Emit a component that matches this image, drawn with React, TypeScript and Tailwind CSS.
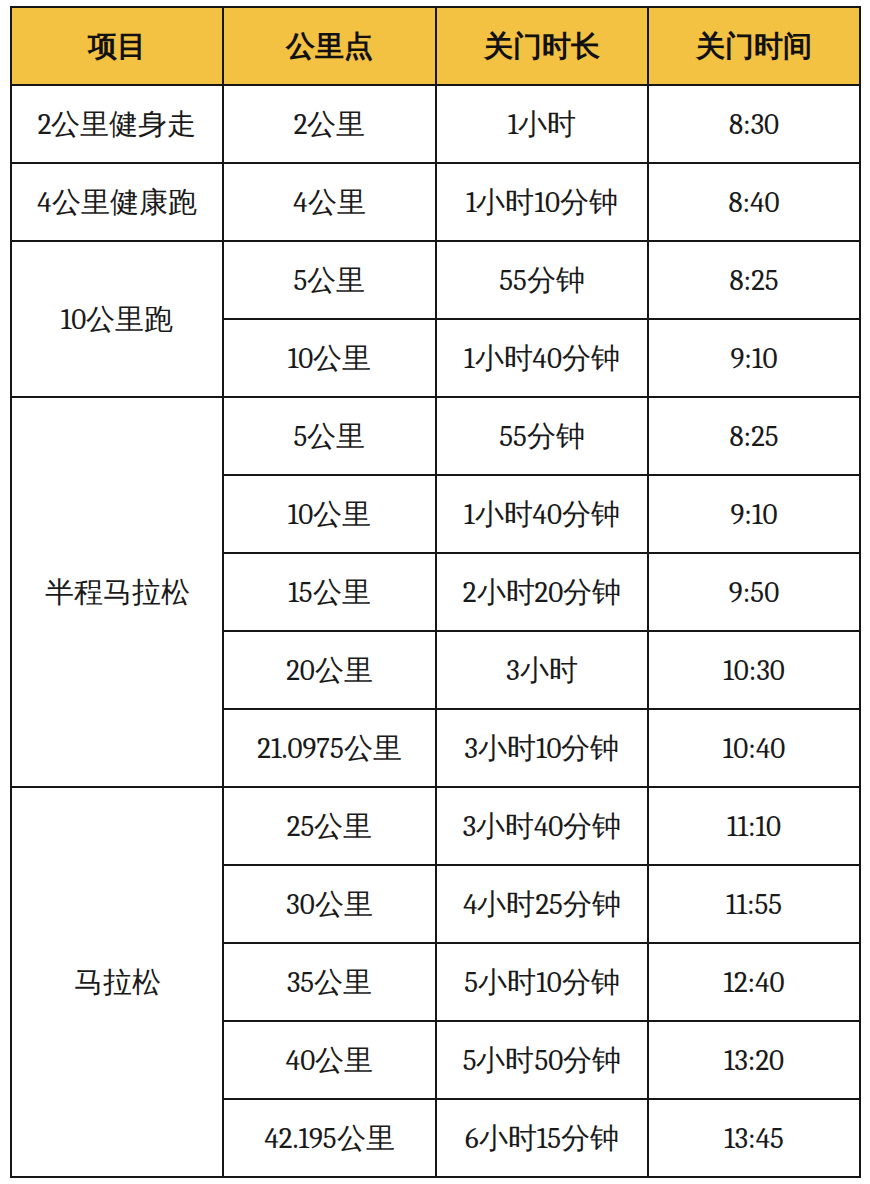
import React from "react";

type Row = { km: string; dur: string; time: string };

const groups: { name: string; rows: Row[] }[] = [
  { name: "2公里健身走", rows: [{ km: "2公里", dur: "1小时", time: "8:30" }] },
  { name: "4公里健康跑", rows: [{ km: "4公里", dur: "1小时10分钟", time: "8:40" }] },
  {
    name: "10公里跑",
    rows: [
      { km: "5公里", dur: "55分钟", time: "8:25" },
      { km: "10公里", dur: "1小时40分钟", time: "9:10" },
    ],
  },
  {
    name: "半程马拉松",
    rows: [
      { km: "5公里", dur: "55分钟", time: "8:25" },
      { km: "10公里", dur: "1小时40分钟", time: "9:10" },
      { km: "15公里", dur: "2小时20分钟", time: "9:50" },
      { km: "20公里", dur: "3小时", time: "10:30" },
      { km: "21.0975公里", dur: "3小时10分钟", time: "10:40" },
    ],
  },
  {
    name: "马拉松",
    rows: [
      { km: "25公里", dur: "3小时40分钟", time: "11:10" },
      { km: "30公里", dur: "4小时25分钟", time: "11:55" },
      { km: "35公里", dur: "5小时10分钟", time: "12:40" },
      { km: "40公里", dur: "5小时50分钟", time: "13:20" },
      { km: "42.195公里", dur: "6小时15分钟", time: "13:45" },
    ],
  },
];

const cell =
  "border-2 border-[#161616] text-center align-middle p-0 font-serif";

export default function App() {
  return (
    <div className="w-[870px] h-[1184px] bg-white pt-[6px] pl-[10px] font-serif text-[#1a1a1a]">
      <table className="border-collapse table-fixed w-[849px] text-[29px] leading-none font-serif">
        <colgroup>
          <col className="w-[212px]" />
          <col className="w-[213px]" />
          <col className="w-[212px]" />
          <col className="w-[212px]" />
        </colgroup>
        <thead>
          <tr className="h-[78px] bg-[#f4c242]">
            {["项目", "公里点", "关门时长", "关门时间"].map((h) => (
              <th key={h} className={cell + " font-bold text-[#111]"}>
                {h}
              </th>
            ))}
          </tr>
        </thead>
        <tbody>
          {groups.map((g) =>
            g.rows.map((r, i) => (
              <tr key={g.name + i} className="h-[78px]">
                {i === 0 && (
                  <td rowSpan={g.rows.length} className={cell}>
                    {g.name}
                  </td>
                )}
                <td className={cell}>{r.km}</td>
                <td className={cell}>{r.dur}</td>
                <td className={cell}>{r.time}</td>
              </tr>
            ))
          )}
        </tbody>
      </table>
    </div>
  );
}
